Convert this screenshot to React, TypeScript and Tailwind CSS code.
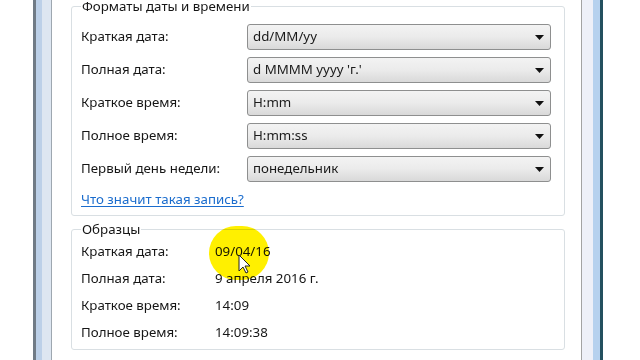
const formats = [
  { label: 'Краткая дата:', value: 'dd/MM/yy' },
  { label: 'Полная дата:', value: "d MMMM yyyy 'г.'" },
  { label: 'Краткое время:', value: 'H:mm' },
  { label: 'Полное время:', value: 'H:mm:ss' },
  { label: 'Первый день недели:', value: 'понедельник' },
]

const samples = [
  { label: 'Краткая дата:', value: '09/04/16' },
  { label: 'Полная дата:', value: '9 апреля 2016 г.' },
  { label: 'Краткое время:', value: '14:09' },
  { label: 'Полное время:', value: '14:09:38' },
]

function Combo({ value }: { value: string }) {
  return (
    <div className="w-[304px] h-[26px] flex items-center justify-between pl-[5px] pr-[6px] rounded-[3px] border border-[#8e8f8f] bg-gradient-to-b from-[#f3f3f3] via-[#ebebeb] to-[#d9d9d9] text-[#1a1a1a]">
      <span>{value}</span>
      <svg width="9" height="5" viewBox="0 0 9 5">
        <path d="M0 0h9L4.5 5z" fill="#111" />
      </svg>
    </div>
  )
}

export default function App() {
  return (
    <div
      className="relative w-[640px] h-[360px] overflow-hidden bg-white flex text-[13.3px] text-[#161616]"
      style={{ fontFamily: '"Noto Sans", "Open Sans", sans-serif' }}
    >
      {/* left window frame */}
      <div className="w-[33px] shrink-0" />
      <div className="w-[3px] shrink-0 bg-[#707b86]" />
      <div className="w-[6px] shrink-0 bg-[#bcd0e8]" />
      <div className="w-[9px] shrink-0 bg-[#dde6f1]" />
      <div className="w-[1px] shrink-0 bg-[#9ea7b0]" />

      {/* dialog content */}
      <div className="w-[529px] shrink-0 bg-white pl-[19px] pr-[16px]">
        <fieldset className="-mt-[2px] border border-[#d9dfe3] rounded-[3px] pl-[9px] pr-[12px] pb-[8px]">
          <legend className="px-[1px] leading-[16px]">Форматы даты и времени</legend>
          <div className="pt-[10px] flex flex-col gap-[7px]">
            {formats.map((f) => (
              <div key={f.value} className="flex items-center">
                <span className="w-[166px] shrink-0">{f.label}</span>
                <Combo value={f.value} />
              </div>
            ))}
          </div>
          <a href="#" className="block mt-[9px] leading-[16px] text-[#1a6ccd] underline underline-offset-2">
            Что значит такая запись?
          </a>
        </fieldset>

        <fieldset className="mt-[5px] border border-[#d9dfe3] rounded-[3px] pl-[9px] pb-[3px]">
          <legend className="px-[1px] leading-[16px]">Образцы</legend>
          <div className="pt-[1px] flex flex-col">
            {samples.map((s) => (
              <div key={s.label} className="h-[27px] flex items-center">
                <span className="w-[134px] shrink-0">{s.label}</span>
                <span>{s.value}</span>
              </div>
            ))}
          </div>
        </fieldset>
      </div>

      {/* right window frame */}
      <div className="w-[1px] shrink-0 bg-[#a3a3a3]" />
      <div className="w-[11px] shrink-0 bg-[#eef0f8]" />
      <div className="w-[7px] shrink-0 bg-[#b6d1ee]" />
      <div className="w-[3px] shrink-0 bg-[#23505f]" />
      <div className="flex-1" />

      {/* cursor highlight */}
      <div className="absolute left-[209px] top-[226px] w-[60px] h-[54px] rounded-full bg-[#fff000] mix-blend-multiply" />
      <svg className="absolute left-[238px] top-[254px]" width="13" height="20" viewBox="0 0 13 20">
        <path d="M1 1v16l4-4 3 6 2-1-3-6h5z" fill="#fff" stroke="#222" strokeWidth="1" strokeLinejoin="round" />
      </svg>
    </div>
  )
}
